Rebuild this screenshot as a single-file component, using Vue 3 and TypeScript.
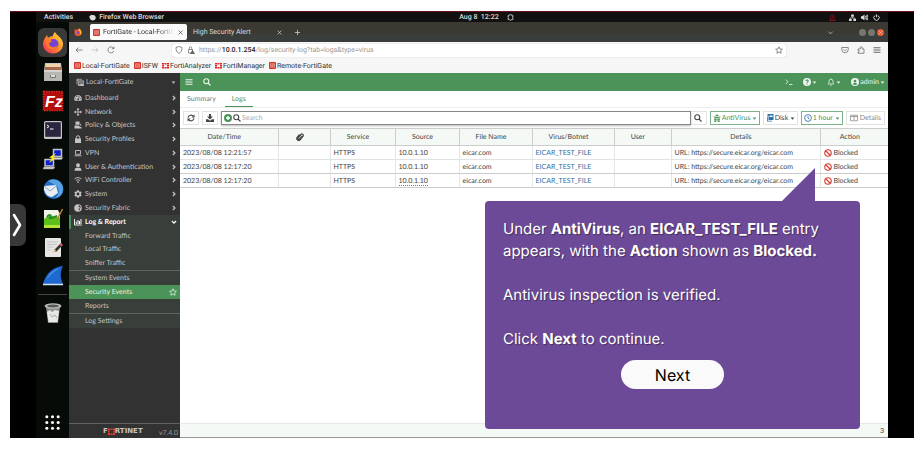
<script setup lang="ts">
import { h, ref } from 'vue'

type Shape = { d: string; line?: number; even?: boolean }

const shapes: Record<string, Shape[]> = {
  bars: [{ d: 'M1 3.5h14M1 8h14M1 12.5h14', line: 2 }],
  search: [{ d: 'M6.5 1.5a5 5 0 1 0 0 10a5 5 0 0 0 0-10zM10.5 10.5L15 15', line: 2.2 }],
  gauge: [{ d: 'M8 2a7.5 7.5 0 0 0-6.3 11.6h12.600A7.500 7.500 0 0 0 8 2zM7.200 3.500h1.600v1.800h-1.600zM2.500 8.500h1.800v1.600h-1.800zM3.800 5l1.200-1l1.200 1.200l-1.200 1.100zM11.700 8.500h1.800v1.600h-1.800zM10.800 4.600l.9.6l-2.300 4.200a1.700 1.700 0 1 1-1-.5z', even: true }],
  move: [{ d: 'M8 1v14M1 8h14', line: 1.8 }, { d: 'M8 0l3 3.600H5zM8 16l3-3.600H5zM0 8l3.600-3v6zM16 8l-3.600-3v6z' }],
  policy: [{ d: 'M3 1h8v6.500H3zM1 9h9l2 3h3v3H1z' }, { d: 'M12 5l2 5', line: 1.6 }],
  lock: [{ d: 'M2 7h12v9H2z' }, { d: 'M4.500 8V5a3.500 3.500 0 0 1 7 0v3', line: 2 }],
  laptop: [{ d: 'M3 3h10v7.500H3zM1 13.500h14', line: 1.8 }],
  user: [{ d: 'M8 0.500a4 4 0 0 1 0 8a4 4 0 0 1 0-8zM1 15.500c0-4 2-6 4-6h6c2 0 4 2 4 6z' }],
  wifi: [{ d: 'M1 6a10 10 0 0 1 14 0M4 9a6 6 0 0 1 8 0', line: 1.800 }, { d: 'M8 10.500a1.700 1.700 0 1 1 0 3.400a1.700 1.700 0 0 1 0-3.400z' }],
  gear: [{ d: 'M6.500 0.500h3l.5 2l1.800 1l2-.6l1.500 2.600l-1.500 1.500v2l1.500 1.500l-1.500 2.600l-2-.6l-1.800 1l-.5 2h-3l-.5-2l-1.800-1l-2 .6L.7 10.500L2.200 9V7L.7 5.500l1.500-2.600l2 .6l1.800-1zM8 5.200a2.800 2.800 0 1 0 0 5.600a2.800 2.800 0 0 0 0-5.600z', even: true }],
  fabric: [{ d: 'M8 .5a7.500 7.500 0 1 0 0 15a7.500 7.500 0 0 0 0-15zM9 2.500c3 .5 4.500 2.500 4.800 5L9.500 6zM9 9h4l-3 4.500z', even: true }],
  chart: [{ d: 'M1 2v12h14.500', line: 1.800 }, { d: 'M3.500 7h2v5h-2zM7 4h2v8H7zM10 6h2v6h-2zM13 2h2v10h-2z' }],
  right: [{ d: 'M5 2.500l5.500 5.500L5 13.500', line: 3.400 }],
  down: [{ d: 'M2.500 5.500L8 11l5.500-5.500', line: 3.400 }],
  chevron: [{ d: 'M3 6l5 5l5-5', line: 1.600 }],
  caret: [{ d: 'M2 5h12l-6 7z' }],
  star: [{ d: 'M8 1.500l2 4.500l4.800.5l-3.600 3.200l1 4.800L8 12l-4.200 2.500l1-4.800L1.200 6.500L6 6z', line: 1.500 }],
  stack: [{ d: 'M2 13V2.500h10M1.500 4.500h3', line: 1.500 }, { d: 'M4.500 5h11v11h-11zM6 7v1.800h8V7zM6 10.500v1.600h3.400v-1.600zM10.800 10.500v1.600H14v-1.600zM6 13.500v1.200h3.400v-1.200z', even: true }],
  help: [{ d: 'M8 0a8 8 0 1 0 0 16A8 8 0 0 0 8 0zM4.800 6.200C4.800 4 6.200 3 8.100 3c2 0 3.300 1.200 3.300 2.900c0 2.100-2.200 2.300-2.200 3.800H7c0-2.500 2-2.700 2-3.800c0-.6-.4-.9-1-.9c-.7 0-1 .4-1.100 1.200zM7 11h2.200v2.200H7z', even: true }],
  bell: [{ d: 'M2 12c2-1.500 2-3 2-5.500a4 4 0 0 1 8 0c0 2.500 0 4 2 5.500zM6.500 14.500h3M8 1v1.500', line: 1.500 }],
  admin: [{ d: 'M8 0a8 8 0 1 0 0 16A8 8 0 0 0 8 0zM8 3.500a2.800 2.800 0 1 1 0 5.600a2.800 2.800 0 0 1 0-5.600zM3.500 12c1-1.800 2.500-2 4.500-2s3.500.2 4.500 2c-2.500 2.500-6.500 2.500-9 0z', even: true }],
  prompt: [{ d: 'M1.500 3l4.500 4.500L1.500 12M8 13h7', line: 1.700 }],
  refresh: [{ d: 'M2 7.500A6 6 0 0 1 13 5M14 8.500A6 6 0 0 1 3 11', line: 2.200 }, { d: 'M15 1v6H9zM1 15V9h6z' }],
  download: [{ d: 'M6 0h4v5h4l-6 6l-6-6h4zM0 10.500h4l4 3l4-3h4V16H0z' }],
  plus: [{ d: 'M8 0a8 8 0 1 0 0 16A8 8 0 0 0 8 0zM6.600 4h2.800v2.600H12v2.800H9.400V12H6.600V9.400H4V6.600h2.600z', even: true }],
  bug: [{ d: 'M4.500 4.500a3.500 3.500 0 0 1 7 0zM3 6h10v2H3zM2 9.500h12v2H2zM3 13h3v3H3zM10 13h3v3h-3zM7 12h2v3H7z' }, { d: 'M1 4l3 3M15 4l-3 3M4 8v7M12 8v7', line: 1.500 }],
  disk: [{ d: 'M3 0h12v12H5V4H3zM7 3v3h6V3z', even: true }, { d: 'M2 5h1.500v8.500H12V15H2z' }],
  clock: [{ d: 'M8 1.200a6.800 6.800 0 1 0 0 13.600A6.800 6.800 0 0 0 8 1.200zM8 4v4.500l3 1.500', line: 1.700 }],
  columns: [{ d: 'M1 2.500h14v11H1zM1 5h14M8 3v10', line: 1.500 }],
  clip: [{ d: 'M12.500 6L7 12.500a2 2 0 0 1-3-2.500l6-7a2.600 2.600 0 0 1 4 3.500L8 14a4 4 0 0 1-6-5l5-6', line: 2.400 }],
  ban: [{ d: 'M8 1.500a6.500 6.500 0 1 0 0 13a6.500 6.500 0 0 0 0-13zM3.500 3.500l9 9', line: 2.200 }],
  back: [{ d: 'M15 8H2M7 3L2 8l5 5', line: 1.500 }],
  forward: [{ d: 'M1 8h13M9 3l5 5l-5 5', line: 1.500 }],
  reload: [{ d: 'M13.500 10A6 6 0 1 1 13 4.500M14 1v4.500H9.500', line: 1.500 }],
  shield: [{ d: 'M8 1l6 2c0 6-1.500 9.500-6 12C3.500 12.500 2 9 2 3z', line: 1.500 }],
  padlock: [{ d: 'M3 7h8v7H3zM4.500 7V4a2.500 2.500 0 0 1 5 0v3', line: 1.400 }, { d: 'M11 7l5 9H6z' }],
  pocket: [{ d: 'M1.500 3h13v4a6.500 6.500 0 0 1-13 0zM5 6.500l3 3l3-3', line: 1.500 }],
  puzzle: [{ d: 'M2 14.500h12V6h-3.500V3.500a2 2 0 0 0-4 0V6H2v3h1a1.500 1.500 0 0 1 0 3H2z', line: 1.500 }],
  close: [{ d: 'M3.500 3.500l9 9M12.500 3.500l-9 9', line: 1.500 }],
  add: [{ d: 'M8 2v12M2 8h12', line: 1.600 }],
  fox: [{ d: 'M1 4l2 1l1-4l3 2c5-2 9 2 8.500 6.500a7.200 7.200 0 0 1-14-1C1 7 .5 5 1 4z' }],
  notice: [{ d: 'M3 3h3V1.500h4V3h3v10H9l-1 2l-1-2H3zM1 5h2M1 11h2M13 5h2M13 11h2', line: 1.600 }],
  net: [{ d: 'M5 1h6v5H5zM0 11h6v5H0zM10 11h6v5h-6z' }, { d: 'M8 6v3M3 11V9h10v2', line: 1.500 }],
  volume: [{ d: 'M0 5h3l5-4v14l-5-4H0z' }, { d: 'M10 5a5 5 0 0 1 0 6M12 3a8 8 0 0 1 0 10M14 1.500a11 11 0 0 1 0 13', line: 2 }],
  power: [{ d: 'M4.500 3.500a6 6 0 1 0 7 0M8 1v6.500', line: 2.200 }],
  update: [{ d: 'M4 14V6a4 4 0 0 1 8 0v8zM0 15h16M8 5v4M8 11v1.500', line: 1.700 }]
}

const Glyph = (props: { name: string }) =>
  h(
    'svg',
    { viewBox: '0 0 16 16', 'aria-hidden': 'true', class: 'glyph' },
    shapes[props.name].map((s) =>
      h('path', {
        d: s.d,
        fill: s.line ? 'none' : 'currentColor',
        stroke: s.line ? 'currentColor' : 'none',
        'stroke-width': s.line,
        'fill-rule': s.even ? 'evenodd' : 'nonzero'
      })
    )
  )
Glyph.props = ['name']

const bookmarks = [
  { label: 'Local-FortiGate', wide: false },
  { label: 'ISFW', wide: false },
  { label: 'FortiAnalyzer', wide: true },
  { label: 'FortiManager', wide: true },
  { label: 'Remote-FortiGate', wide: false }
]

const menu = [
  { icon: 'gauge', label: 'Dashboard' },
  { icon: 'move', label: 'Network' },
  { icon: 'policy', label: 'Policy & Objects' },
  { icon: 'lock', label: 'Security Profiles' },
  { icon: 'laptop', label: 'VPN' },
  { icon: 'user', label: 'User & Authentication' },
  { icon: 'wifi', label: 'WiFi Controller' },
  { icon: 'gear', label: 'System' },
  { icon: 'fabric', label: 'Security Fabric' }
]
const traffic = ['Forward Traffic', 'Local Traffic', 'Sniffer Traffic']

const columns = ['Date/Time', '', 'Service', 'Source', 'File Name', 'Virus/Botnet', 'User', 'Details', 'Action']
const rows = ['2023/08/08 12:21:57', '2023/08/08 12:17:20', '2023/08/08 12:17:20'].map((time) => ({
  time,
  service: 'HTTPS',
  source: '10.0.1.10',
  file: 'eicar.com',
  virus: 'EICAR_TEST_FILE',
  details: 'URL: https://secure.eicar.org/eicar.com',
  action: 'Blocked'
}))

const query = ref('')
const dots = [3, 9, 15]
</script>

<template>
  <main class="stage">
    <div class="bezel">
      <button class="drawer" aria-label="Open panel">
        <svg viewBox="0 0 16 42" aria-hidden="true"><path d="M4 11l6 10l-6 10" fill="none" stroke="#fff" stroke-width="2.600" stroke-linecap="round" stroke-linejoin="round" /></svg>
      </button>
    </div>
    <div class="desktop">
      <header class="topbar">
        <button>Activities</button>
        <button class="app-menu"><Glyph name="fox" />Firefox Web Browser</button>
        <button class="clock">Aug 8&nbsp; 12:22 <Glyph name="notice" /></button>
        <div class="status"><Glyph name="update" class="alert" /><Glyph name="net" /><Glyph name="volume" /><Glyph name="power" /></div>
      </header>
      <div class="workspace">
        <aside class="dock">
          <div class="launchers">
            <button class="launcher current" aria-label="Firefox">
              <svg viewBox="0 0 22 22">
                <defs>
                  <linearGradient id="flame" x1="1" y1="0" x2="0" y2="1"><stop offset="0" stop-color="#ffe84a" /><stop offset=".45" stop-color="#ff9525" /><stop offset="1" stop-color="#f0225e" /></linearGradient>
                </defs>
                <path d="M3 6l2-3l1 3c1-1 3-2 5-2c0-2 1-3 2-4c1 3 7 5 8 11c.5 6-4 10.500-10 10.500S1 17 1 12c0-2.500 1-4.500 2-6z" fill="url(#flame)" />
                <circle cx="11.500" cy="12" r="5" fill="#7244cf" />
                <path d="M5 7c2 0 3 1 5 2c-1 2-3 1-3 3c1 4 6 4 9 1c-1 5-9 6-11 1c-1-2-1-5 0-7z" fill="#ff7a25" />
              </svg>
            </button>
            <button class="launcher" aria-label="Files">
              <svg viewBox="0 0 22 22"><path d="M3 2h16l1 8v10H2V10z" fill="#c9c6c0" /><path d="M4 3h14v3H4z" fill="#f3d3ac" /><path d="M3 6h16v3H3z" fill="#aa6a4e" /><rect x="2" y="9" width="18" height="11" rx="1" fill="#b8b8b2" /><path d="M2 10h18" stroke="#eee" /><path d="M8.500 14v2.500h5V14" fill="#ddd" stroke="#777" /></svg>
            </button>
            <button class="launcher" aria-label="FileZilla">
              <svg viewBox="0 0 22 22"><rect x="1.500" y="1.500" width="19" height="19" fill="#b50c0c" stroke="#df2a22" stroke-width="1.500" stroke-dasharray="1.500 1" /><text x="3" y="17" class="fz">Fz</text></svg>
            </button>
            <button class="launcher" aria-label="Terminal">
              <svg viewBox="0 0 22 22"><rect x="2" y="2" width="18" height="18" rx="1.500" fill="#c4c4c6" /><rect x="3.200" y="3.200" width="15.600" height="14.600" fill="#2c2540" /><path d="M5 6l2 1.500L5 9M8 10h3.500" fill="none" stroke="#fff" /></svg>
            </button>
            <button class="launcher" aria-label="PuTTY">
              <svg viewBox="0 0 22 22"><path d="M11.500 1.500h8v7h-8zM3 11.500h8.500v6.500H3z" fill="#1020d0" stroke="#c4c4c4" stroke-width="1.500" /><path d="M10.500 9.500h10.500l-1.500 2h-10zM2 19h11l-1.500 2H1z" fill="#ddd" stroke="#888" stroke-width=".6" /><path d="M14 5l-7 4.500l3 .5l-3 5l7-5l-3-.5z" fill="#ffec22" /></svg>
            </button>
            <button class="launcher" aria-label="Thunderbird">
              <svg viewBox="0 0 22 22"><circle cx="11.500" cy="11" r="10" fill="#236fc2" /><path d="M6 3c6-4 15 0 15 8c0 5-4 9-8 9c4-3 5-7 2-12z" fill="#57a3e6" /><path d="M2 8l12-1l2 8l-6 4c-4 0-7-3-8-8z" fill="#e8edf4" /><path d="M2 8l6 5l6-5" fill="none" stroke="#8ea5bd" /></svg>
            </button>
            <button class="launcher" aria-label="Notes">
              <svg viewBox="0 0 22 22"><path d="M2 3h14l2 4v14H2z" fill="#f0f2e8" /><path d="M2 12c5-4 10-4 16-1v10H2z" fill="#5cbf1a" /><path d="M2 18h16v3H2z" fill="#b5e338" /><path d="M5 10c3-4 5-1 3 1c3 1 6-2 7-2" fill="none" stroke="#2a8a2c" stroke-width="2" /><path d="M20.500 2L15 13" stroke="#bc7c27" stroke-width="1.600" /></svg>
            </button>
            <button class="launcher" aria-label="Text Editor">
              <svg viewBox="0 0 22 22"><rect x="3" y="2" width="16" height="19" rx="1" fill="#e6e6e4" /><path d="M5 6h11M5 8.500h10M5 11h7M5 14h4" stroke="#c4c4c4" /><path d="M20 8l-7 7" stroke="#333" stroke-width="2.600" /><path d="M18.500 9.500l1.500-1.500" stroke="#e05a6a" stroke-width="2.600" /><path d="M13 13l-3 4l4-2z" fill="#e9b96e" /></svg>
            </button>
            <button class="launcher" aria-label="Wireshark">
              <svg viewBox="0 0 22 22"><path d="M1 19C4 8 11 2 21 1c-3 6-3 12 0 18z" fill="#1f68cf" /><path d="M4 15C8 7 13 4 18 3c-6 3-10 7-14 12z" fill="#4f9bee" /><path d="M1 19.500h20" stroke="#d6e3ef" stroke-width="1.500" /></svg>
            </button>
          </div>
          <button class="launcher trash" aria-label="Trash">
            <svg viewBox="0 0 22 22"><path d="M4 5h14l-2 16H6z" fill="#8b8f8c" /><path d="M5 10l3-2l2 2l3-2l4 1l-1.500 11h-9z" fill="#e6e8e6" /><path d="M8 12l2 3l3-2l2 3" stroke="#aaa" fill="none" /><ellipse cx="11" cy="4" rx="8.500" ry="2.800" fill="#b9bdba" /><ellipse cx="11" cy="4" rx="6" ry="1.400" fill="#555a57" /></svg>
          </button>
          <button class="launcher apps" aria-label="Show applications">
            <svg viewBox="0 0 18 18"><template v-for="y in dots" :key="y"><circle v-for="x in dots" :key="x" :cx="x" :cy="y" r="1.600" fill="#fff" /></template></svg>
          </button>
        </aside>

        <section class="browser">
          <div class="tabs">
            <svg class="fox" viewBox="0 0 16 16" aria-hidden="true"><path d="M1 5l2-3l2 2l4-2l1-1c3 2 5 4 5 8a7 7 0 0 1-14 0z" fill="#f9562e" /><path d="M10 1c3 2 5 4 5 8c0 2-1 4-3 5c1-4 0-7-3-10z" fill="#ffc02c" /><circle cx="8" cy="9" r="3" fill="#8050c8" /></svg>
            <div class="tab selected">
              <svg class="brand" viewBox="0 0 14 14" aria-hidden="true"><rect width="14" height="14" rx="2" fill="#d43527" /><path d="M3 3.500h8v7H3zM5.500 5.500h3v3h-3z" fill="none" stroke="#fff" stroke-opacity=".8" /></svg>
              <span class="title">FortiGate - Local-FortiGate</span>
              <button aria-label="Close tab"><Glyph name="close" /></button>
            </div>
            <div class="tab">
              <span class="title">High Security Alert</span>
              <button aria-label="Close tab"><Glyph name="close" /></button>
            </div>
            <button class="new-tab" aria-label="New tab"><Glyph name="add" /></button>
            <button class="tab-list" aria-label="List tabs"><Glyph name="chevron" /></button>
            <div class="window-buttons">
              <button aria-label="Minimize"></button><button aria-label="Maximize"></button><button class="quit" aria-label="Close"><Glyph name="close" /></button>
            </div>
          </div>

          <div class="navbar">
            <div class="history">
              <button aria-label="Back"><Glyph name="back" /></button>
              <button aria-label="Forward" class="off"><Glyph name="forward" /></button>
              <button aria-label="Reload"><Glyph name="reload" /></button>
            </div>
            <div class="address">
              <Glyph name="shield" /><Glyph name="padlock" />
              <div class="url" role="textbox" aria-label="Address" contenteditable="true" spellcheck="false">https://<b>10.0.1.254</b>/log/security-log?tab=logs&amp;type=virus</div>
              <button aria-label="Bookmark this page"><Glyph name="star" /></button>
            </div>
            <div class="extras">
              <button aria-label="Pocket"><Glyph name="pocket" /></button>
              <button aria-label="Extensions"><Glyph name="puzzle" /></button>
              <button aria-label="Menu"><Glyph name="bars" /></button>
            </div>
          </div>

          <nav class="bookmarks" aria-label="Bookmarks">
            <a v-for="b in bookmarks" :key="b.label" href="#">
              <svg v-if="b.wide" viewBox="0 0 14 14" aria-hidden="true"><path d="M0 2h4v3H0zM5 2h4v3H5zM10 2h4v3h-4zM0 6h4v3H0zM10 6h4v3h-4zM0 10h4v3H0zM5 10h4v3H5zM10 10h4v3h-4z" fill="#e02020" /></svg>
              <svg v-else viewBox="0 0 14 14" aria-hidden="true"><rect width="14" height="14" rx="2" fill="#d43527" /><path d="M3 3.500h8v7H3zM5.500 5.500h3v3h-3z" fill="none" stroke="#fff" stroke-opacity=".8" /></svg>
              {{ b.label }}
            </a>
          </nav>

          <div class="fortigate">
            <aside class="sidebar">
              <button class="device"><Glyph name="stack" /><span>Local-FortiGate</span><Glyph name="caret" class="mini" /></button>
              <nav class="menu" aria-label="Main">
                <a v-for="m in menu" :key="m.label" href="#"><Glyph :name="m.icon" /><span>{{ m.label }}</span><Glyph name="right" class="arrow" /></a>
                <a href="#" class="open"><Glyph name="chart" /><span>Log &amp; Report</span><Glyph name="down" class="arrow" /></a>
                <a v-for="t in traffic" :key="t" href="#" class="sub">{{ t }}</a>
              </nav>
              <nav class="group" aria-label="Events">
                <a href="#" class="sub">System Events</a>
                <a href="#" class="sub active"><span>Security Events</span><Glyph name="star" /></a>
                <a href="#" class="sub">Reports</a>
              </nav>
              <nav class="group" aria-label="Settings">
                <a href="#" class="sub">Log Settings</a>
              </nav>
              <footer class="vendor">
                <span class="logo">F<svg viewBox="0 0 14 14" aria-hidden="true"><path d="M0 1h4v4H0zM5 1h4v3H5zM10 1h4v4h-4zM0 6h3v3H0zM11 6h3v3h-3zM0 10h4v4H0zM5 11h4v3H5zM10 10h4v4h-4z" fill="#f03a2c" /></svg>RTINET</span>
                <span class="version">v7.4.0</span>
              </footer>
            </aside>

            <section class="content">
              <header class="appbar">
                <button aria-label="Toggle menu"><Glyph name="bars" /></button>
                <button aria-label="Search"><Glyph name="search" /></button>
                <button class="cli" aria-label="CLI console"><Glyph name="prompt" /></button>
                <button aria-label="Help"><Glyph name="help" /><Glyph name="caret" class="mini" /></button>
                <button aria-label="Notifications"><Glyph name="bell" /><Glyph name="caret" class="mini" /></button>
                <button class="account"><Glyph name="admin" />admin<Glyph name="caret" class="mini" /></button>
              </header>
              <nav class="views" aria-label="Views">
                <a href="#">Summary</a>
                <a href="#" class="active">Logs</a>
              </nav>
              <div class="tools">
                <button aria-label="Refresh"><Glyph name="refresh" /></button>
                <button aria-label="Download"><Glyph name="download" /></button>
                <div class="finder">
                  <label class="find"><Glyph name="plus" class="green" /><Glyph name="search" /><input v-model="query" type="text" placeholder="Search" aria-label="Search logs" /></label>
                  <button aria-label="Run search"><Glyph name="search" /></button>
                </div>
                <label class="pick on"><Glyph name="bug" /><select aria-label="Log type"><option>AntiVirus</option></select><Glyph name="caret" class="mini" /></label>
                <label class="pick"><Glyph name="disk" class="blue" /><select aria-label="Log location"><option>Disk</option></select><Glyph name="caret" class="mini" /></label>
                <label class="pick on"><Glyph name="clock" class="blue" /><select aria-label="Time range"><option>1 hour</option></select><Glyph name="caret" class="mini" /></label>
                <button class="details" disabled><Glyph name="columns" />Details</button>
              </div>
              <table>
                <colgroup>
                  <col class="w-time" /><col class="w-clip" /><col class="w-service" /><col class="w-source" /><col class="w-file" /><col class="w-virus" /><col class="w-user" /><col /><col class="w-action" />
                </colgroup>
                <thead>
                  <tr><th v-for="c in columns" :key="c" scope="col"><Glyph v-if="!c" name="clip" />{{ c }}</th></tr>
                </thead>
                <tbody>
                  <tr v-for="(r, i) in rows" :key="i">
                    <td>{{ r.time }}</td><td></td><td>{{ r.service }}</td><td><span class="source">{{ r.source }}</span></td><td>{{ r.file }}</td>
                    <td><a href="#">{{ r.virus }}</a></td><td></td><td>{{ r.details }}</td>
                    <td><span class="verdict"><Glyph name="ban" class="ban" />{{ r.action }}</span></td>
                  </tr>
                </tbody>
              </table>
              <footer class="count">{{ rows.length }}</footer>
            </section>
          </div>
        </section>
      </div>

      <section class="callout" aria-label="Instructions">
        <svg class="pointer" viewBox="0 0 34 34" aria-hidden="true"><path d="M0 34L34 0v34z" fill="#6c4a98" /></svg>
        <p>Under <b>AntiVirus</b>, an <b>EICAR_TEST_FILE</b> entry appears, with the <b>Action</b> shown as <b>Blocked.</b></p>
        <p>Antivirus inspection is verified.</p>
        <p>Click <b>Next</b> to continue.</p>
        <button>Next</button>
      </section>
    </div>
    <div class="bezel"></div>
  </main>
</template>

<style>
body {
  background: #fff;
}
</style>

<style scoped>
.stage {
  box-sizing: border-box;
  min-height: 100vh;
  padding: 11px 10px;
  display: flex;
  font-family: Lato, sans-serif;
  font-size: 7px;
  line-height: 10px;
  text-rendering: geometricPrecision;
}
.stage * {
  box-sizing: border-box;
}
button, input, select {
  font: inherit;
  color: inherit;
  text-rendering: inherit;
  background: none;
  border: 0;
  padding: 0;
  margin: 0;
}
button {
  display: inline-flex;
  align-items: center;
  justify-content: center;
}
a {
  color: inherit;
  text-decoration: none;
}
.glyph {
  width: 8px;
  height: 8px;
  flex: none;
}
.glyph.mini {
  width: 5px;
  height: 5px;
}
.bezel {
  flex: none;
  width: 26px;
  background: #000;
  border-top: 1px solid #6c1020;
  display: flex;
  align-items: center;
}
.drawer {
  width: 16px;
  height: 42px;
  background: #383838;
  border-radius: 0 7px 7px 0;
}
.drawer svg {
  width: 16px;
  height: 42px;
}
.desktop {
  flex: 1;
  min-width: 0;
  position: relative;
  display: flex;
  flex-direction: column;
}
.topbar {
  height: 11px;
  padding: 0 8px;
  display: flex;
  align-items: center;
  background: #111;
  border-top: 1px solid #6c1020;
  color: #ddd;
  font: 500 7px/10px Roboto, sans-serif;
}
.topbar button {
  gap: 3px;
}
.topbar .glyph {
  width: 7px;
  height: 7px;
}
.app-menu {
  margin-left: 16px;
}
.clock {
  margin: 0 auto;
}
.topbar .clock {
  gap: 8px;
}
.status {
  display: flex;
  align-items: center;
  gap: 5px;
  padding-left: 20px;
}
.status .alert {
  color: #8c1520;
  margin-right: 8px;
}
.workspace {
  flex: 1;
  display: flex;
}
.dock {
  flex: none;
  width: 33px;
  background: #060b08;
  display: flex;
  flex-direction: column;
  align-items: center;
  padding: 6px 0 7px;
}
.launchers {
  height: 267px;
  display: grid;
  grid-auto-rows: 1fr;
  border-bottom: 1px solid #444;
  padding-bottom: 3px;
}
.launcher {
  width: 29px;
}
.launcher svg {
  width: 22px;
  height: 22px;
}
.current {
  background: #393939;
  border-radius: 6px;
}
.fz {
  font: italic 700 16px "Liberation Sans", sans-serif;
  fill: #fff;
}
.trash {
  margin-top: 7px;
}
.apps {
  margin-top: auto;
}
.launcher.apps svg {
  width: 17px;
  height: 17px;
}
.browser {
  flex: 1;
  min-width: 0;
  display: flex;
  flex-direction: column;
  font-family: Roboto, sans-serif;
}
.tabs {
  height: 20px;
  padding: 0 4px 0 5px;
  display: flex;
  align-items: center;
  background: linear-gradient(#3c3932, #3a3933 60%, #393d3b 62%, #393d3b);
  color: #ddd;
}
.fox {
  width: 8px;
  height: 8px;
  margin-right: 8px;
}
.tab {
  width: 99px;
  height: 16px;
  padding: 0 3px 0 6px;
  display: flex;
  align-items: center;
  gap: 3px;
}
.tab.selected {
  width: 97px;
  padding-left: 3px;
  background: #fafafa;
  border-radius: 2px;
  color: #333;
}
.brand {
  width: 7px;
  height: 7px;
  flex: none;
}
.title {
  flex: 1;
  min-width: 0;
  overflow: hidden;
  white-space: nowrap;
}
.selected .title {
  mask-image: linear-gradient(90deg, #000 78%, transparent);
}
.tabs .glyph {
  width: 7px;
  height: 7px;
}
.tab-list {
  margin-left: auto;
}
.new-tab {
  margin-left: 8px;
}
.window-buttons {
  display: flex;
  gap: 2px;
  margin-left: 25px;
}
.window-buttons button {
  width: 7px;
  height: 7px;
  border-radius: 50%;
  background: #77766f;
}
.window-buttons .quit {
  background: #e9592b;
}
.navbar {
  height: 16px;
  display: flex;
  align-items: center;
  background: #f6f6f6;
  color: #666;
}
.history {
  width: 103px;
  padding-left: 6px;
  display: flex;
  gap: 8px;
}
.off {
  opacity: 0.4;
}
.address {
  flex: 1;
  min-width: 0;
  max-width: 614px;
  height: 13px;
  padding: 0 3px;
  display: flex;
  align-items: center;
  gap: 4px;
  background: #fff;
  border-radius: 2px;
  box-shadow: 0 0 1px #aaa;
}
.url {
  flex: 1;
  color: #999;
  white-space: nowrap;
}
.url b {
  color: #222;
  font-weight: 500;
}
.extras {
  margin-left: auto;
  padding-right: 7px;
  display: flex;
  gap: 8px;
}
.bookmarks {
  height: 15px;
  padding: 0 5px;
  display: flex;
  align-items: center;
  gap: 4px;
  background: #f6f6f6;
  color: #333;
}
.bookmarks a {
  display: flex;
  align-items: center;
  gap: 1px;
}
.bookmarks svg {
  width: 7px;
  height: 7px;
}
.fortigate {
  flex: 1;
  display: flex;
  font-family: Lato, sans-serif;
}
.sidebar {
  flex: none;
  width: 111px;
  display: flex;
  flex-direction: column;
  background: #323232;
  color: #c4c4c4;
}
.device {
  height: 18px;
  padding: 0 4px 0 7px;
  gap: 2px;
}
.device span {
  flex: 1;
  text-align: left;
}
.menu {
  height: 179px;
  display: grid;
  grid-auto-rows: 1fr;
}
.menu a, .group a {
  padding: 0 3px 0 5px;
  display: flex;
  align-items: center;
  gap: 3px;
}
.menu a span, .group a span {
  flex: 1;
}
.menu .arrow {
  width: 6px;
  height: 6px;
}
.menu .open {
  background: #383e3a;
  border-left: 2px solid #4a8f58;
  padding-left: 3px;
  color: #fff;
  font-weight: 700;
}
.menu .sub, .group .sub {
  background: #383e3a;
  padding-left: 16px;
}
.group {
  border-top: 1px solid #606461;
}
.group a {
  height: 14px;
}
.group .sub.active {
  background: #4b9359;
  color: #e4f2e6;
}
.vendor {
  margin-top: auto;
  height: 15px;
  padding: 0 2px 0 34px;
  display: flex;
  justify-content: space-between;
  align-items: center;
  border-top: 1px solid #606461;
}
.logo {
  display: flex;
  align-items: center;
  font: 700 7px/10px "DejaVu Sans", sans-serif;
}
.logo svg {
  width: 7px;
  height: 7px;
}
.version {
  align-self: flex-end;
  color: #999;
}
.content {
  flex: 1;
  min-width: 0;
  display: flex;
  flex-direction: column;
  background: #fff;
  color: #444;
}
.appbar {
  height: 18px;
  padding: 0 3px 0 5px;
  display: flex;
  align-items: center;
  gap: 10px;
  background: #4b9359;
  color: #eef7ef;
}
.appbar button {
  gap: 1px;
}
.cli {
  margin-left: auto;
}
.views {
  height: 17px;
  display: flex;
  gap: 2px;
  border-bottom: 1px solid #eee;
  color: #777;
}
.views a {
  padding: 0 7px;
  line-height: 17px;
}
.views .active {
  color: #4b9359;
  border-bottom: 1px solid #4b9359;
}
.tools {
  height: 20px;
  padding: 0 3px;
  display: flex;
  align-items: center;
  gap: 3px;
}
.tools > button, .pick {
  height: 14px;
  min-width: 16px;
  border: 1px solid #e2e2e2;
}
.finder {
  flex: 1;
  display: flex;
  height: 14px;
}
.find {
  flex: 1;
  display: flex;
  align-items: center;
  gap: 1px;
  padding: 0 2px;
  border: 1px solid #888;
  box-shadow: 0 1px 2px #bbb;
}
.find input {
  flex: 1;
  min-width: 0;
  outline: none;
}
.find input::placeholder {
  color: #aaa;
}
.finder button {
  width: 16px;
  border: 1px solid #e2e2e2;
  border-left: 0;
}
.pick {
  padding: 0 2px;
  display: flex;
  align-items: center;
  gap: 1px;
}
.pick select {
  appearance: none;
  line-height: 10px;
}
.pick.on {
  color: #4b9359;
  border-color: #7db188;
}
.green {
  color: #4b9359;
}
.blue {
  color: #2e72a8;
}
.tools .details {
  padding: 0 3px;
  gap: 2px;
  color: #888;
}
table {
  width: 100%;
  table-layout: fixed;
  border-collapse: collapse;
}
.w-time { width: 98px; }
.w-clip { width: 52px; }
.w-service { width: 65px; }
.w-source { width: 64px; }
.w-file { width: 73px; }
.w-virus { width: 82px; }
.w-user { width: 57px; }
.w-action { width: 68px; }
th, td {
  padding: 0 3px;
  white-space: nowrap;
  border-left: 1px solid #e4e8e5;
}
th:first-child, td:first-child {
  border-left: 0;
}
th {
  height: 17px;
  padding-right: 12px;
  background: #f4f9f6;
  border-top: 1px solid #ccc;
  border-bottom: 1px solid #ccc;
  border-left-color: #ccc;
  font-weight: 400;
}
td {
  height: 14px;
  border-bottom: 1px solid #e2e2e2;
}
tr:nth-last-child(-n+2) td {
  border-bottom-color: #ccc;
}
th .glyph {
  vertical-align: middle;
}
td a {
  color: #2d6e9f;
}
.verdict {
  display: flex;
  align-items: center;
  gap: 2px;
}
.ban {
  color: #d8382c;
}
tr:last-child .source {
  border-bottom: 1px dotted #777;
}
.count {
  margin-top: auto;
  height: 15px;
  padding: 0 4px;
  border-top: 1px solid #e6e9e7;
  border-bottom: 1px solid #999;
  background: #f4f9f6;
  text-align: right;
  line-height: 14px;
}
.callout {
  position: absolute;
  right: 28px;
  bottom: 9px;
  width: 375px;
  padding: 17px 18px 40px;
  background: #6c4a98;
  border-radius: 4px;
  color: #fff;
  font: 15px/22px Inter, sans-serif;
  text-shadow: 1px 1px 1px rgba(0, 0, 0, 0.4);
}
.pointer {
  position: absolute;
  right: 45px;
  bottom: 100%;
  width: 33px;
  height: 33px;
}
.callout p {
  margin: 0 0 22px;
}
.callout p:last-of-type {
  margin-bottom: 10px;
}
.callout button {
  display: flex;
  margin: 0 auto;
  width: 103px;
  height: 29px;
  border-radius: 15px;
  background: #fafafa;
  color: #000;
  font-size: 16px;
  text-shadow: none;
}
</style>
